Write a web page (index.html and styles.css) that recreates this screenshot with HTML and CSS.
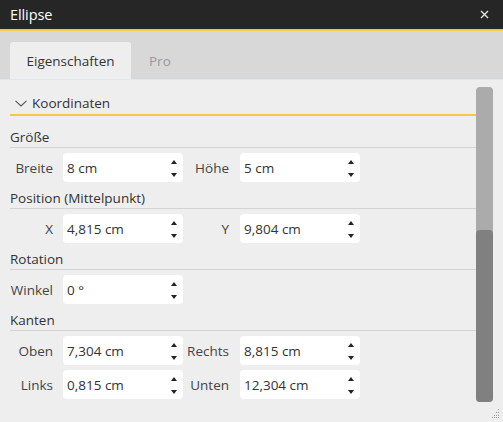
FILE: index.html
```html
<!DOCTYPE html>
<html>
<head>
<meta charset="utf-8">
<link rel="stylesheet" href="styles.css">
</head>
<body>
<div class="window">
  <div class="titlebar">
    <span class="title">Ellipse</span>
    <svg class="close" width="9" height="9" viewBox="0 0 9 9"><path d="M1 1L8 8M8 1L1 8" stroke="#e0e0e0" stroke-width="1.4"/></svg>
  </div>
  <div class="tabs">
    <div class="tab active">Eigenschaften</div>
    <div class="tab">Pro</div>
  </div>
  <div class="body">
    <div class="main">
      <div class="section-head">
        <svg class="chev" width="12" height="7" viewBox="0 0 12 7"><path d="M0.5 0.8L6 6L11.5 0.8" fill="none" stroke="#555" stroke-width="1.1"/></svg>
        <span>Koordinaten</span>
      </div>

      <div class="group first">
        <div class="group-head">Größe</div>
        <div class="row">
          <span class="lbl">Breite</span>
          <div class="input"><span>8 cm</span><span class="spin"><i class="up"></i><i class="down"></i></span></div>
          <span class="lbl2">Höhe</span>
          <div class="input"><span>5 cm</span><span class="spin"><i class="up"></i><i class="down"></i></span></div>
        </div>
      </div>

      <div class="group">
        <div class="group-head">Position (Mittelpunkt)</div>
        <div class="row">
          <span class="lbl">X</span>
          <div class="input"><span>4,815 cm</span><span class="spin"><i class="up"></i><i class="down"></i></span></div>
          <span class="lbl2">Y</span>
          <div class="input"><span>9,804 cm</span><span class="spin"><i class="up"></i><i class="down"></i></span></div>
        </div>
      </div>

      <div class="group">
        <div class="group-head">Rotation</div>
        <div class="row">
          <span class="lbl">Winkel</span>
          <div class="input"><span>0 °</span><span class="spin"><i class="up"></i><i class="down"></i></span></div>
        </div>
      </div>

      <div class="group">
        <div class="group-head">Kanten</div>
        <div class="row">
          <span class="lbl">Oben</span>
          <div class="input"><span>7,304 cm</span><span class="spin"><i class="up"></i><i class="down"></i></span></div>
          <span class="lbl2">Rechts</span>
          <div class="input"><span>8,815 cm</span><span class="spin"><i class="up"></i><i class="down"></i></span></div>
        </div>
        <div class="row">
          <span class="lbl">Links</span>
          <div class="input"><span>0,815 cm</span><span class="spin"><i class="up"></i><i class="down"></i></span></div>
          <span class="lbl2">Unten</span>
          <div class="input"><span>12,304 cm</span><span class="spin"><i class="up"></i><i class="down"></i></span></div>
        </div>
      </div>
    </div>
    <div class="scrollbar">
      <div class="thumb"></div>
    </div>
  </div>
  <svg class="grip" width="10" height="9" viewBox="0 0 10 9">
    <g fill="#9a9a9a">
      <rect x="8" y="0" width="1" height="1"/>
      <rect x="6" y="3" width="1" height="1"/><rect x="8" y="3" width="1" height="1"/>
      <rect x="4" y="6" width="1" height="1"/><rect x="6" y="6" width="1" height="1"/><rect x="8" y="6" width="1" height="1"/>
      <rect x="2" y="8" width="1" height="1"/><rect x="4" y="8" width="1" height="1"/><rect x="6" y="8" width="1" height="1"/><rect x="8" y="8" width="1" height="1"/>
    </g>
  </svg>
</div>
</body>
</html>
```
FILE: styles.css
```css
* { box-sizing: border-box; }
html, body {
  margin: 0;
  padding: 0;
  background: #eeeeee;
}
body {
  font-family: "Open Sans", "Noto Sans", sans-serif;
  font-size: 13.5px;
  color: #333;
}
.window {
  position: relative;
  width: 503px;
  height: 422px;
  overflow: hidden;
  background: #eeeeee;
}
.titlebar {
  height: 31px;
  background: #262626;
  border-bottom: 2px solid #f7c846;
  display: flex;
  align-items: center;
  justify-content: space-between;
  padding: 0 14px 1px 10px;
}
.title {
  color: #ffffff;
  font-size: 14.5px;
  letter-spacing: -0.1px;
}
.close { display: block; }
.tabs {
  height: 49px;
  background: #d8d8d8;
  display: flex;
  align-items: flex-end;
  padding-left: 10px;
  border-bottom: 1px solid #e3e6ea;
}
.tab {
  height: 37px;
  padding: 0 18px;
  display: flex;
  align-items: center;
  color: #999;
}
.tab.active {
  width: 121px;
  justify-content: center;
  padding: 0;
  background: #eeeeee;
  color: #333;
  border-radius: 3px 3px 0 0;
}
.body {
  display: flex;
  padding: 0 10px;
}
.main {
  flex: 1;
}
.section-head {
  margin-top: 12px;
  height: 24px;
  border-bottom: 2px solid #f7c846;
  display: flex;
  align-items: center;
  padding-left: 5px;
  padding-bottom: 1px;
  color: #333;
}
.chev { margin-right: 5px; margin-top: 1px; }
.group { margin-top: 6px; }
.group.first { margin-top: 11px; }
.group-head {
  height: 21px;
  border-bottom: 1px solid #d3d3d3;
  display: flex;
  align-items: center;
  padding-bottom: 1px;
  color: #333;
}
.row {
  display: flex;
  align-items: center;
  margin-top: 5px;
  height: 29px;
}
.lbl {
  width: 43px;
  text-align: right;
  margin-right: 10px;
  color: #444;
  white-space: nowrap;
}
.lbl2 {
  width: 57px;
  text-align: right;
  padding-right: 11px;
  color: #444;
  white-space: nowrap;
}
.input {
  width: 120px;
  height: 29px;
  background: #ffffff;
  border-radius: 4px;
  display: flex;
  align-items: center;
  justify-content: space-between;
  padding: 0 5px 0 4px;
  color: #333;
}
.spin {
  display: flex;
  flex-direction: column;
  justify-content: space-between;
  height: 17px;
  width: 7px;
  margin-top: 1px;
}
.spin i {
  display: block;
  width: 0;
  height: 0;
  border-left: 3.5px solid transparent;
  border-right: 3.5px solid transparent;
}
.spin .up { border-bottom: 4px solid #222; }
.spin .down { border-top: 4px solid #222; }
.scrollbar {
  width: 17px;
  margin-top: 7px;
  height: 315px;
  background: #ababab;
  border-radius: 4px;
  display: flex;
  flex-direction: column;
  justify-content: flex-end;
}
.thumb {
  height: 172px;
  background: #808080;
  border-radius: 4px;
}
.grip {
  position: absolute;
  right: 3px;
  bottom: 4px;
}
```
